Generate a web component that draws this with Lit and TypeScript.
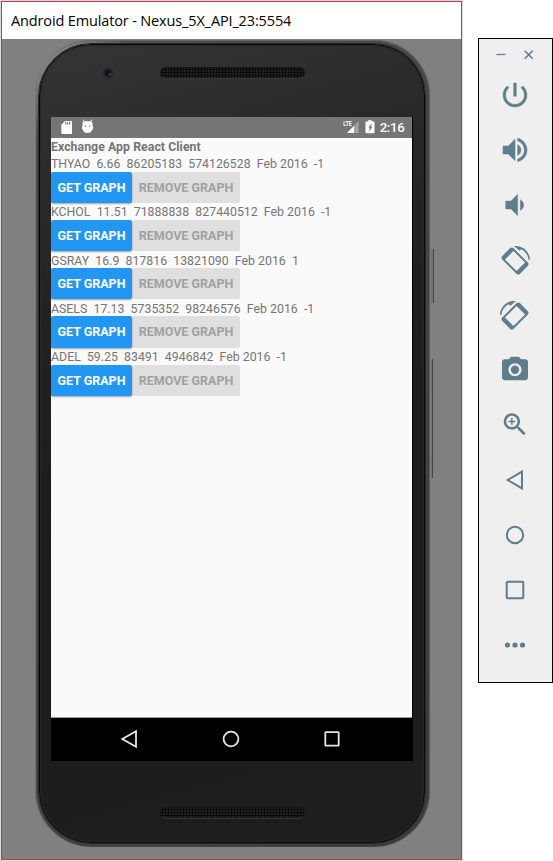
import { LitElement, html, css, svg } from "lit";
import { customElement } from "lit/decorators.js";

interface Quote {
  symbol: string;
  price: string;
  volume: string;
  turnover: string;
  period: string;
  trend: string;
}

const QUOTES: Quote[] = [
  { symbol: "THYAO", price: "6.66", volume: "86205183", turnover: "574126528", period: "Feb 2016", trend: "-1" },
  { symbol: "KCHOL", price: "11.51", volume: "71888838", turnover: "827440512", period: "Feb 2016", trend: "-1" },
  { symbol: "GSRAY", price: "16.9", volume: "817816", turnover: "13821090", period: "Feb 2016", trend: "1" },
  { symbol: "ASELS", price: "17.13", volume: "5735352", turnover: "98246576", period: "Feb 2016", trend: "-1" },
  { symbol: "ADEL", price: "59.25", volume: "83491", turnover: "4946842", period: "Feb 2016", trend: "-1" },
];

/* Device tilted by 45 degrees with an arc arrow over its upper right side. */
const rotateShape = svg`
  <path transform="translate(16 17) rotate(-45) scale(1.14) translate(-12 -12)"
    d="M17 1H7C5.9 1 5 1.9 5 3v18c0 1.1.9 2 2 2h10c1.1 0 2-.9 2-2V3c0-1.1-.9-2-2-2zM17.3 19.2H6.7V4.8h10.6z" fill-rule="evenodd"/>
  <path d="M15 2.1C23.500 1 30.700 7.500 31 15.800L29.500 15.800C29 10.800 26.200 7.300 22.200 5.200L20.600 6.700z"/>`;

const TOOLS = [
  svg`<g transform="scale(1.3333)"><path d="M13 3h-2v10h2V3zm4.830 2.170l-1.420 1.420C17.990 7.860 19 9.810 19 12c0 3.870-3.130 7-7 7s-7-3.130-7-7c0-2.190 1.010-4.140 2.580-5.420L6.170 5.170C4.230 6.820 3 9.260 3 12c0 4.970 4.030 9 9 9s9-4.030 9-9c0-2.740-1.230-5.180-3.170-6.830z" stroke="currentColor" stroke-width=".3"/></g>`,
  svg`<g transform="scale(1.3333)"><path d="M3 9v6h4l5 5V4L7 9H3zm13.500 3c0-1.770-1.020-3.290-2.500-4.030v8.050c1.480-.73 2.500-2.250 2.500-4.020zM14 3.230v2.060c2.890.86 5 3.540 5 6.710s-2.110 5.850-5 6.710v2.060c4.010-.91 7-4.490 7-8.770s-2.990-7.860-7-8.770z" stroke="currentColor" stroke-width=".35"/></g>`,
  svg`<g transform="scale(1.3333)"><path d="M18.500 12c0-1.770-1.020-3.290-2.500-4.030v8.050c1.480-.73 2.500-2.250 2.500-4.020zM5 9v6h4l5 5V4L9 9H5z" stroke="currentColor" stroke-width=".3"/></g>`,
  rotateShape,
  svg`<g transform="translate(32 0) scale(-1 1)">${rotateShape}</g>`,
  svg`<g transform="scale(1.3) translate(.3 .1)"><path fill-rule="evenodd" d="M9 2L7.170 4H4c-1.100 0-2 .9-2 2v12c0 1.100.9 2 2 2h16c1.100 0 2-.9 2-2V6c0-1.100-.9-2-2-2h-3.170L15 2H9zm3 15c-2.760 0-5-2.240-5-5s2.240-5 5-5 5 2.240 5 5-2.240 5-5 5z"/><circle cx="12" cy="12" r="3.200"/></g>`,
  svg`<g transform="translate(1 .6) scale(1.25)"><path d="M15.500 14h-.79l-.28-.27C15.410 12.590 16 11.110 16 9.500 16 5.910 13.090 3 9.500 3S3 5.910 3 9.500 5.910 16 9.500 16c1.610 0 3.090-.59 4.230-1.570l.27.28v.79l5 4.990L20.490 19l-4.990-5zm-6 0C7.010 14 5 11.990 5 9.500S7.010 5 9.500 5 14 7.010 14 9.500 11.990 14 9.500 14z"/><path d="M12.200 10.100h-2.100v2.100H8.900v-2.100H6.800V8.900h2.100V6.800h1.200v2.100h2.100z"/></g>`,
  svg`<path class="line" d="M23 7.600V24.400L8.700 16z"/>`,
  svg`<circle class="line" cx="16" cy="16" r="8.200"/>`,
  svg`<rect class="line" x="7.700" y="7.700" width="16.600" height="16.600" rx="1"/>`,
  svg`<circle cx="8.500" cy="16" r="2.600"/><circle cx="16" cy="16" r="2.600"/><circle cx="23.500" cy="16" r="2.600"/>`,
];

@customElement("emulator-toolbar")
class EmulatorToolbar extends LitElement {
  static styles = css`
    :host {
      display: flex;
      flex-direction: column;
      box-sizing: border-box;
      width: 75px;
      height: 645px;
      border: 1px solid #000;
      background: #efefef;
      color: #607d8b;
    }
    svg { display: block; fill: currentColor; }
    .line { fill: none; stroke: currentColor; stroke-width: 2; }
    .controls { display: flex; gap: 18px; height: 28px; padding: 3px 0 0 17px; align-items: center; box-sizing: border-box; }
    .controls svg { fill: none; stroke: currentColor; }
    .tool { display: flex; flex: none; height: 55px; align-items: center; justify-content: center; padding-right: 1px; }
  `;

  render() {
    return html`
      <div class="controls">
        <svg width="10" height="10" viewBox="0 0 10 10"><path d="M.5 4.500h9" stroke-width="1.300"/></svg>
        <svg width="10" height="10" viewBox="0 0 10 10"><path d="M.7 .7l8 8M8.700 .7l-8 8" stroke-width="1.600"/></svg>
      </div>
      ${TOOLS.map(t => html`<div class="tool"><svg width="32" height="32" viewBox="0 0 32 32">${t}</svg></div>`)}
    `;
  }
}

@customElement("exchange-app")
class ExchangeApp extends LitElement {
  static styles = css`
    :host {
      display: block;
      height: 579px;
      background: #fafafa;
      color: #757575;
      font: 12.3px/16.4px Roboto, sans-serif;
      border-bottom: 1px solid #9b9b9b;
      overflow: hidden;
    }
    .heading { font-weight: 700; height: 17.2px; line-height: 18px; letter-spacing: 0.05px; }
    .quote { height: 48.2px; }
    .figures { white-space: pre; height: 16.6px; line-height: 18.4px; letter-spacing: 0.02px; }
    .actions { display: flex; }
    .btn {
      height: 31.200px;
      line-height: 32px;
      width: 81px;
      text-align: center;
      font-weight: 700;
      font-size: 12.5px;
      border-radius: 2px;
      background: #2196f3;
      color: #fff;
      box-shadow: 0 1px 2px rgba(0, 0, 0, 0.35);
      position: relative;
      z-index: 1;
      white-space: nowrap;
    }
    .off { width: 108px; background: #dfdfdf; color: #a1a1a1; box-shadow: none; z-index: 0; }
  `;

  render() {
    return html`
      <div class="heading">Exchange App React Client</div>
      ${QUOTES.map(q => html`<div class="quote">
        <div class="figures">${[q.symbol, q.price, q.volume, q.turnover, q.period, q.trend].join("  ")}</div>
        <div class="actions"><div class="btn">GET GRAPH</div><div class="btn off">REMOVE GRAPH</div></div>
      </div>`)}
    `;
  }
}

@customElement("app-root")
class AppRoot extends LitElement {
  static styles = css`
    :host {
      display: flex;
      align-items: flex-start;
      box-sizing: border-box;
      width: 553px;
      height: 861px;
      padding-top: 1px;
      padding-left: 1px;
      background: #fff;
      overflow: hidden;
    }
    .window {
      display: flex;
      flex-direction: column;
      box-sizing: border-box;
      width: 461px;
      height: 859px;
      border: 1px solid #c43c3f;
      background: #808080;
      box-shadow: 0 0 0 1px #d9dcdc;
    }
    .title {
      height: 37px;
      flex: none;
      background: #fff;
      color: #000;
      padding-left: 9px;
      font: 14.500px/37px "Open Sans", "Noto Sans", sans-serif;
      letter-spacing: -0.14px;
      white-space: pre;
    }
    .phone {
      position: relative;
      box-sizing: border-box;
      width: 395px;
      height: 807px;
      margin: 1px 0 0 33px;
      padding: 4px 5px 4px 4px;
      border-radius: 56px;
      background: linear-gradient(135deg, #9a9a9a 0, #858585 3%, #4c4c4e 8%, #434345 50%, #3a3a3c 100%);
      box-shadow: inset 1px 0 1px #7c7c7c, inset -1px 0 1px #5d5d5d, inset 0 1px 1px #666;
    }
    .face {
      display: flex;
      flex-direction: column;
      box-sizing: border-box;
      width: 386px;
      height: 799px;
      border-radius: 52px;
      border: 1px solid #080808;
      outline: 1px solid #29292b;
      padding: 0 11px;
      background: linear-gradient(165deg, #353537 0, #29292a 18%, #202021 36%, #1c1c1d 55%, #1e1e1f 100%);
      box-shadow: inset 0 0 2px 1px #2b2b2d;
    }
    .key { position: absolute; background: #717173; border-right: 1px solid #464648; }
    .power { left: 396px; top: 209px; width: 2px; height: 54px; }
    .volume { left: 396px; top: 319px; width: 1px; height: 119px; }
    .crown { display: flex; height: 72px; flex: none; }
    .camera { width: 14px; height: 14px; margin: 21px 0 0 50px; }
    .speaker { width: 145px; height: 12px; box-sizing: border-box; border-radius: 6px;
      border: 1px solid #161616; border-bottom-color: #363636; overflow: hidden;
      background: radial-gradient(circle at 1.5px 1.5px, #030303 0.8px, #1f1f1f 1.3px) 0 0 / 3px 3px; }
    .crown .speaker { margin: 22px 0 0 45px; }
    .screen { width: 361px; height: 644px; flex: none; background: #000; border-right: 1px solid #000; }
    .status { display: flex; height: 21px; background: #757575; }
    .status svg { display: block; }
    .lte { font: 700 7.500px Roboto, sans-serif; fill: #fff; }
    .clock { font: 500 13.200px Roboto, sans-serif; fill: #fff; }
    .nav { display: flex; height: 41px; justify-content: center; gap: 77.500px; align-items: center; padding-right: 2px; }
    .nav svg { display: block; fill: none; stroke: #e6e6e6; stroke-width: 1.8; }
    .chin .speaker { margin: 46px 0 0 109px; }
    emulator-toolbar { margin: 37px 0 0 16px; flex: none; }
  `;

  render() {
    return html`
      <div class="window">
        <div class="title">Android Emulator - Nexus_5X_API_23:5554</div>
        <div class="phone">
          <div class="face">
            <div class="crown">
              <svg class="camera" viewBox="0 0 14 14">
                <circle cx="7" cy="7" r="7" fill="#2f2f31"/><circle cx="7" cy="7" r="4.700" fill="#232326"/>
                <circle cx="7" cy="7" r="3" fill="#11131b"/><circle cx="9.200" cy="8.200" r=".9" fill="#76565c"/>
              </svg>
              <div class="speaker"></div>
            </div>
            <div class="screen">
              <div class="status">
                <svg width="361" height="21" viewBox="0 0 361 21">
                  <path fill="#fff" d="M14 4h6q1 0 1 1v11q0 1-1 1h-8.700q-1 0-1-1V7.700z"/>
                  <path stroke="#757575" stroke-width="1.100" d="M14.700 5v2.500M16.700 5v2.500M18.700 5v2.500"/>
                  <path fill="#fff" d="M31.500 9V6.500q0-1.500 1.300-2l-1-1.500.6-.4 1.200 1.700h5.800l1.200-1.700.6.4-1 1.500q1.300.5 1.300 2V9l.6.4V12l-.8.500q-1 3.500-4.800 3.500t-4.800-3.500L31 12V9.400z"/>
                  <circle cx="34.500" cy="9" r=".8" fill="#757575"/><circle cx="38.800" cy="9" r=".8" fill="#757575"/>
                  <path fill="#a4a4a4" d="M307.500 4v12H296z"/>
                  <path fill="#fff" d="M303 8.800V16h-7z"/>
                  <text class="lte" x="292.300" y="9.300" textLength="8.500" lengthAdjust="spacingAndGlyphs">LTE</text>
                  <path fill="#fff" d="M317.200 3.200h3.600v1.300h2.200q.5 0 .5.500v10.500q0 .7-.7.7h-7.600q-.7 0-.7-.7V5q0-.5.5-.5h2.200z"/>
                  <path fill="#757575" d="M320.900 6.300l-3.700 4.300h1.700l-.9 4 3.500-4.700h-1.600z"/>
                  <text class="clock" x="328.700" y="15.300" textLength="25">2:16</text>
                </svg>
              </div>
              <exchange-app></exchange-app>
              <div class="nav">
                <svg width="24" height="24" viewBox="0 0 24 24"><path d="M19 4.200V19.800L5.300 12z"/></svg>
                <svg width="24" height="24" viewBox="0 0 24 24"><circle cx="12" cy="12" r="7.400"/></svg>
                <svg width="24" height="24" viewBox="0 0 24 24"><rect x="5.300" y="5.200" width="13.400" height="13.400" rx=".6"/></svg>
              </div>
            </div>
            <div class="chin"><div class="speaker"></div></div>
          </div>
          <div class="key power"></div>
          <div class="key volume"></div>
        </div>
      </div>
      <emulator-toolbar></emulator-toolbar>
    `;
  }
}
